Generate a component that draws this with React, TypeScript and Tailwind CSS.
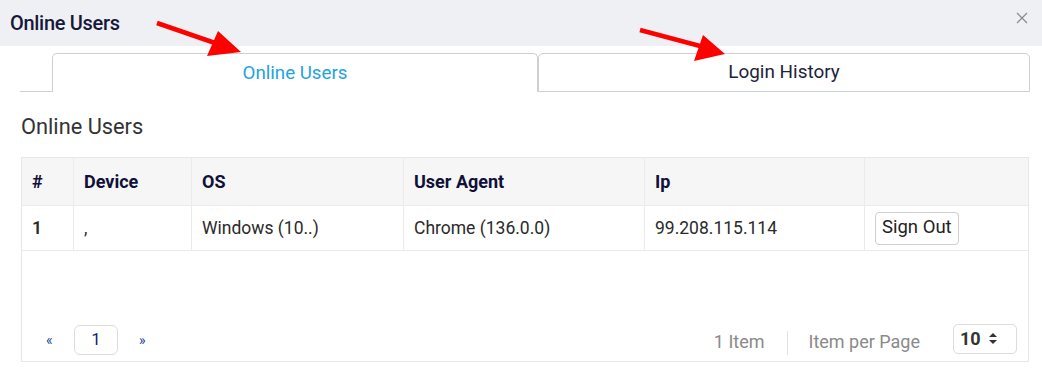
import React from "react";

const font = { fontFamily: "Roboto, 'Liberation Sans', sans-serif" };

export default function App() {
  const cols = [
    { w: "w-[52px]", h: "#" },
    { w: "w-[118px]", h: "Device" },
    { w: "w-[212px]", h: "OS" },
    { w: "w-[241px]", h: "User Agent" },
    { w: "w-[220px]", h: "Ip" },
    { w: "flex-1", h: "" },
  ];
  const row = ["1", ",", "Windows (10..)", "Chrome (136.0.0)", "99.208.115.114"];
  return (
    <div
      className="relative w-[1042px] h-[368px] bg-white overflow-hidden"
      style={font}
    >
      {/* Header */}
      <div className="h-[46px] bg-[#eef0f4] flex items-center justify-between pl-[10px] pr-[14px]">
        <span className="text-[20px] font-medium text-[#17173a] tracking-[-0.3px]">
          Online Users
        </span>
        <svg width="12" height="12" viewBox="0 0 12 12" className="mb-[10px]">
          <path d="M1 1 L11 11 M11 1 L1 11" stroke="#8a8a8a" strokeWidth="1.2" />
        </svg>
      </div>

      {/* Tabs */}
      <div className="flex items-end pl-[20px] pr-[12px] mt-[7px] h-[39px]">
        <div className="w-[32px] h-full border-b border-[#ccd0d6]" />
        <div className="w-[486px] h-full border border-b-0 border-[#ccd0d6] rounded-t-[5px] flex items-center justify-center text-[18.7px] text-[#1fa3df]">
          Online Users
        </div>
        <div className="flex-1 h-full border border-[#ccd0d6] rounded-t-[5px] flex items-center justify-center text-[18.9px] text-[#22223a]">
          Login History
        </div>
      </div>

      {/* Section title */}
      <div className="pl-[21px] mt-[22px] text-[21.8px] text-[#333] leading-[26px]">
        Online Users
      </div>

      {/* Table */}
      <div className="mx-[21px] mt-[17px] w-[1008px] h-[205px] border border-[#e7e7e7] flex flex-col">
        <div className="flex h-[48px] bg-[#f6f6f6] border-b border-[#ebebeb]">
          {cols.map((c, i) => (
            <div
              key={i}
              className={`${c.w} ${i < cols.length - 1 ? "border-r border-[#ebebeb]" : ""} flex items-center pl-[10px] text-[18px] font-bold text-[#10103a]`}
            >
              {c.h}
            </div>
          ))}
        </div>
        <div className="flex h-[45px] border-b border-[#ebebeb]">
          {cols.map((c, i) => (
            <div
              key={i}
              className={`${c.w} ${i < cols.length - 1 ? "border-r border-[#ebebeb]" : ""} flex items-center pl-[10px] text-[17.5px] text-[#2a2a2a] ${i === 0 ? "font-semibold" : ""}`}
            >
              {i < 5 ? (
                row[i]
              ) : (
                <button className="h-[33px] px-[6px] border border-[#cfcfcf] rounded-[4px] text-[18.5px] text-[#222] bg-white">
                  Sign Out
                </button>
              )}
            </div>
          ))}
        </div>
        <div className="flex-1 flex items-end justify-between pb-[6px] pl-[24px] pr-[11px]">
          <div className="flex items-center">
            <span className="text-[14px] text-[#1f3fa0] w-[28px]">«</span>
            <div className="w-[44px] h-[30px] border border-[#dcdcdc] rounded-[6px] flex items-center justify-center text-[17px] text-[#1b1f6b]">
              1
            </div>
            <span className="text-[14px] text-[#1f3fa0] ml-[21px]">»</span>
          </div>
          <div className="flex items-center">
            <span className="text-[18px] text-[#8a8a8a] mt-[6px] mr-[1px]">1 Item</span>
            <div className="w-px h-[24px] bg-[#e2e2e2] mx-[21px] mt-[8px]" />
            <span className="text-[18px] text-[#8a8a8a] mt-[6px]">Item per Page</span>
            <div className="ml-[33px] w-[64px] h-[30px] border border-[#dcdcdc] rounded-[5px] flex items-center pl-[6px] gap-[7px] text-[18px] font-bold text-[#333]">
              10
              <svg width="10" height="13" viewBox="0 0 10 13">
                <path d="M1 5 L5 1 L9 5 Z M1 8 L5 12 L9 8 Z" fill="#333" />
              </svg>
            </div>
          </div>
        </div>
      </div>

      {/* Red annotation arrows */}
      <svg
        className="absolute left-0 top-0 pointer-events-none"
        width="1042"
        height="368"
        viewBox="0 0 1042 368"
      >
        <line x1="157" y1="23" x2="215" y2="43" stroke="#ff0000" strokeWidth="4.5" />
        <polygon points="241,52 218,31 207,56" fill="#ff0000" />
        <line x1="640" y1="30" x2="700" y2="46" stroke="#ff0000" strokeWidth="4.5" />
        <polygon points="725,54 703,35 694,61" fill="#ff0000" />
      </svg>
    </div>
  );
}
